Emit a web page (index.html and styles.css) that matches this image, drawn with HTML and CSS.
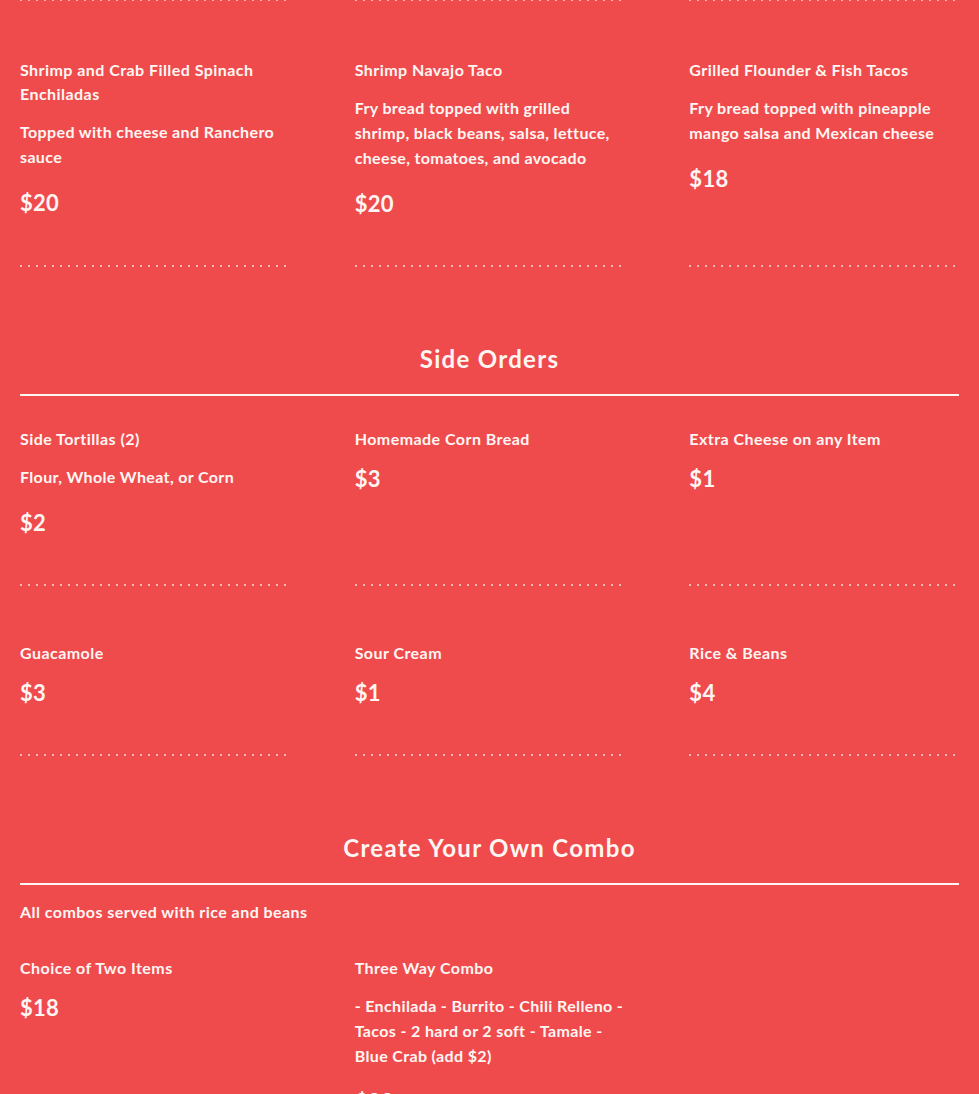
FILE: index.html
```html
<!DOCTYPE html>
<html lang="en">
<head>
<meta charset="utf-8">
<title>Menu</title>
<link rel="stylesheet" href="styles.css">
</head>
<body>
<main class="menu">
  <div class="dots-row">
    <span class="dots"></span><span class="dots"></span><span class="dots"></span>
  </div>
  <section class="items">
    <article class="item">
      <h3 class="item-title">Shrimp and Crab Filled Spinach Enchiladas</h3>
      <p class="item-desc">Topped with cheese and Ranchero sauce</p>
      <p class="item-price">$20</p>
    </article>
    <article class="item">
      <h3 class="item-title">Shrimp Navajo Taco</h3>
      <p class="item-desc">Fry bread topped with grilled shrimp, black beans, salsa, lettuce, cheese, tomatoes, and avocado</p>
      <p class="item-price">$20</p>
    </article>
    <article class="item">
      <h3 class="item-title">Grilled Flounder &amp; Fish Tacos</h3>
      <p class="item-desc">Fry bread topped with pineapple mango salsa and Mexican cheese</p>
      <p class="item-price">$18</p>
    </article>
  </section>

  <header class="section-head">
    <h2 class="section-title">Side Orders</h2>
  </header>
  <section class="items">
    <article class="item">
      <h3 class="item-title">Side Tortillas (2)</h3>
      <p class="item-desc">Flour, Whole Wheat, or Corn</p>
      <p class="item-price">$2</p>
    </article>
    <article class="item">
      <h3 class="item-title">Homemade Corn Bread</h3>
      <p class="item-price">$3</p>
    </article>
    <article class="item">
      <h3 class="item-title">Extra Cheese on any Item</h3>
      <p class="item-price">$1</p>
    </article>
    <article class="item">
      <h3 class="item-title">Guacamole</h3>
      <p class="item-price">$3</p>
    </article>
    <article class="item">
      <h3 class="item-title">Sour Cream</h3>
      <p class="item-price">$1</p>
    </article>
    <article class="item">
      <h3 class="item-title">Rice &amp; Beans</h3>
      <p class="item-price">$4</p>
    </article>
  </section>

  <header class="section-head">
    <h2 class="section-title">Create Your Own Combo</h2>
  </header>
  <p class="section-intro">All combos served with rice and beans</p>
  <section class="items">
    <article class="item">
      <h3 class="item-title">Choice of Two Items</h3>
      <p class="item-price">$18</p>
    </article>
    <article class="item">
      <h3 class="item-title">Three Way Combo</h3>
      <p class="item-desc">- Enchilada - Burrito - Chili Relleno - Tacos - 2 hard or 2 soft - Tamale - Blue Crab (add $2)</p>
      <p class="item-price">$22</p>
    </article>
  </section>
</main>
</body>
</html>
```

FILE: styles.css
```css
html, body {
  margin: 0;
  padding: 0;
  background: #ef4b4d;
}

body {
  font-family: Lato, "Open Sans", "Liberation Sans", sans-serif;
  color: #fff6f3;
  -webkit-font-smoothing: antialiased;
}

.menu {
  padding: 0 20px 40px;
}

.dots-row {
  display: grid;
  grid-template-columns: repeat(3, 1fr);
  column-gap: 65px;
  margin-top: -1px;
  margin-bottom: 26px;
}

.dots {
  display: block;
  height: 2px;
  background-image: linear-gradient(to right, rgba(255, 228, 228, 0.7) 0 2px, transparent 2px 8px);
  background-size: 8px 2px;
  background-repeat: repeat-x;
}

.items {
  display: grid;
  grid-template-columns: repeat(3, 1fr);
  column-gap: 65px;
  row-gap: 24px;
}

.item {
  padding: 31px 0 48px;
  background-image: linear-gradient(to right, rgba(255, 228, 228, 0.7) 0 2px, transparent 2px 8px);
  background-size: 8px 2px;
  background-repeat: repeat-x;
  background-position: left bottom;
}

.item-title {
  margin: 0 0 13px;
  font-size: 16px;
  line-height: 24px;
  font-weight: 700;
  letter-spacing: 0.45px;
}

.item-desc {
  margin: 0 0 19px;
  font-size: 16px;
  line-height: 25px;
  font-weight: 700;
  letter-spacing: 0.36px;
}

.item-price {
  margin: 0;
  font-size: 22px;
  line-height: 30px;
  font-weight: 700;
  letter-spacing: 0.3px;
}

.section-head {
  margin-top: 76px;
  padding-bottom: 19px;
  border-bottom: 2px solid #fff6f3;
}

.section-title {
  margin: 0;
  text-align: center;
  font-size: 24px;
  line-height: 32px;
  font-weight: 700;
  letter-spacing: 1.3px;
}

.section-intro {
  margin: 15px 0 1px;
  font-size: 16px;
  line-height: 24px;
  font-weight: 700;
  letter-spacing: 0.45px;
}
```
